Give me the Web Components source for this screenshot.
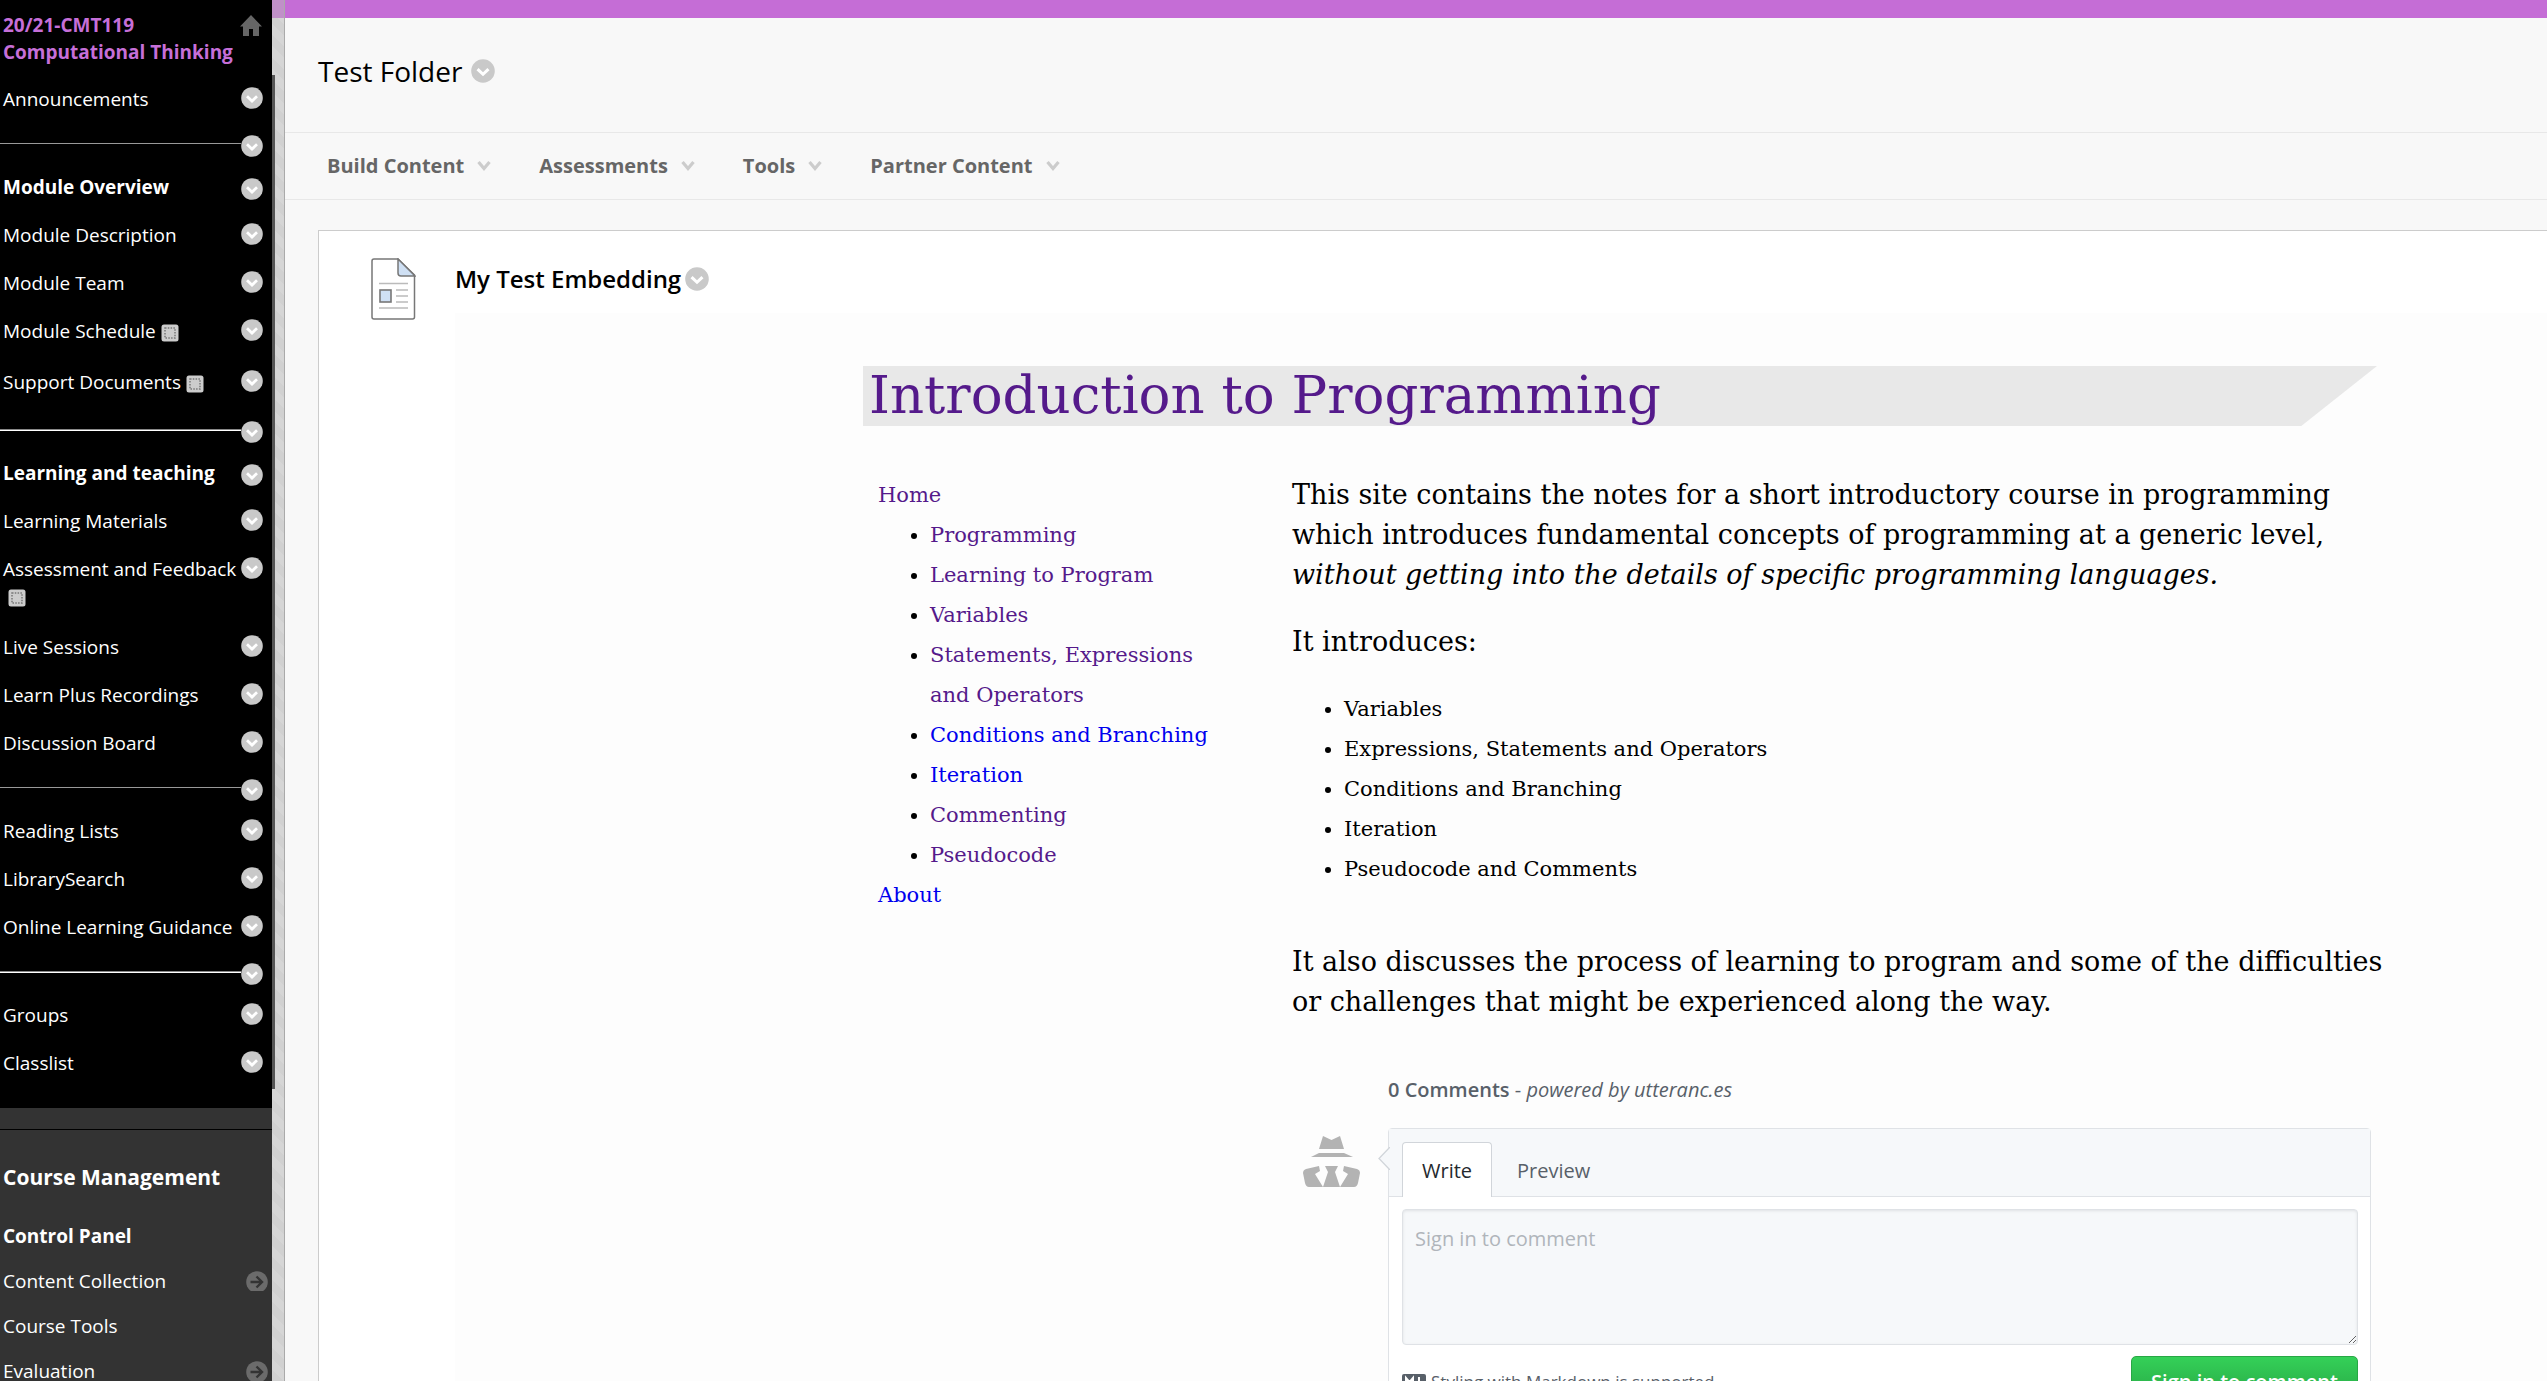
<!DOCTYPE html>
<html lang="en">
<head>
<meta charset="utf-8">
<title>Test Folder</title>
<style>
  html, body { margin: 0; height: 100%; overflow: hidden; }
  body { font-family: "Open Sans", sans-serif; font-size: 20px; background: #f8f8f8; color: #000; }
</style>
</head>
<body>
<course-page></course-page>
<script>
const define = (name, html) => customElements.define(name, class extends HTMLElement {
  constructor() {
    super();
    const t = document.createElement('template');
    t.innerHTML = html;
    this.attachShadow({ mode: 'open' }).append(t.content.cloneNode(true));
  }
});

define('menu-dot', `
<style>
  :host { display: block; flex: none; width: 22px; height: 22px; }
  :host([large]) { width: 24px; height: 24px; }
  button { display: block; width: 100%; height: 100%; padding: 0; border: 0; background: none; }
  svg { display: block; width: 100%; height: 100%; }
</style>
<button aria-label="Options"><svg viewBox="0 0 22 22"><circle cx="11" cy="11" r="10.8" fill="#c9c9c9"/><path d="M6 9.300l5 4.700 5-4.700" fill="none" stroke="#fff" stroke-width="2.800"/></svg></button>`);

define('hidden-mark', `
<style>:host { display: inline-block; width: 18px; height: 18px; vertical-align: -4px; } svg { display: block; }</style>
<svg width="18" height="18" viewBox="0 0 18 18"><rect x=".5" y=".5" width="17" height="17" rx="2.500" fill="#ccc"/><rect x="4" y="4" width="10" height="10" fill="none" stroke="#777" stroke-width="1.500" stroke-dasharray="1.500 1.300"/></svg>`);

define('nav-item', `
<style>
  :host { display: flex; justify-content: space-between; height: 27px; padding: 10px 9px 11px 3px; line-height: 27px; }
  :host([heading]) { padding: 7px 9px 11px 3px; font-weight: 700; }
  :host([marked]) { padding-bottom: 14px; }
  :host([wrapped]) { height: 57px; }
  a { color: #fff; text-decoration: none; white-space: nowrap; }
  menu-dot { margin-top: 1px; }
  :host([heading]) menu-dot { margin-top: 4px; }
</style>
<a href="#"><slot></slot></a><menu-dot></menu-dot>`);

define('nav-divider', `
<style>
  :host { display: flex; padding: 11px 9px 10px 0; }
  :host([short]) { padding-bottom: 7px; }
  hr { flex: 1; height: 1px; margin: 8px 0 0; border: 0; background: #999; }
  :host([strong]) hr { border-top: 1px solid #888; background: #fff; }
</style>
<hr><menu-dot></menu-dot>`);

define('panel-item', `
<style>
  :host { display: flex; justify-content: space-between; align-items: center; height: 45px; padding: 0 4px 0 3px; }
  a { color: #fff; text-decoration: none; }
  svg { display: none; }
  :host([arrow]) svg { display: block; }
</style>
<a href="#"><slot></slot></a>
<svg width="22" height="20" viewBox="0 0 22 20"><circle cx="11" cy="11" r="10.800" fill="#6b6b6b"/><path d="M4.500 11h11M10.500 5.500l5.500 5.500-5.500 5.500" fill="none" stroke="#333" stroke-width="2.400"/></svg>`);

define('course-sidebar', `
<style>
  :host { display: block; width: 272px; flex: none; background: #333; color: #fff; font-size: 19px; }
  .menu { background: #000; padding-bottom: 20px; }
  header { display: flex; justify-content: space-between; align-items: flex-start; height: 76px; box-sizing: border-box; padding: 12px 10px 0 3px; }
  header a { color: #c66fd8; font-weight: 700; line-height: 27px; text-decoration: none; white-space: nowrap; }
  header svg { margin: 3px 0 0 -22px; }
  h2, h3 { margin: 0; padding-left: 3px; }
  h2 { font-size: 21px; line-height: 30px; padding-top: 32px; }
  h3 { font-size: 19px; line-height: 28px; padding-top: 30px; padding-bottom: 8px; }
  .gap { height: 21px; border-bottom: 1px solid #000; }
</style>
<nav class="menu">
  <header><a href="#">20/21-CMT119<br>Computational Thinking</a>
  <svg width="22" height="21" viewBox="0 0 22 21"><path d="M11 0L0 11.500h3V21h6v-7h4v7h6v-9.500h3z" fill="#666"/></svg></header>
  <nav-item>Announcements</nav-item>
  <nav-divider></nav-divider>
  <nav-item heading>Module Overview</nav-item>
  <nav-item>Module Description</nav-item>
  <nav-item>Module Team</nav-item>
  <nav-item marked>Module Schedule <hidden-mark></hidden-mark></nav-item>
  <nav-item marked>Support Documents <hidden-mark></hidden-mark></nav-item>
  <nav-divider strong></nav-divider>
  <nav-item heading>Learning and teaching</nav-item>
  <nav-item>Learning Materials</nav-item>
  <nav-item wrapped>Assessment and Feedback<br>&nbsp;<hidden-mark></hidden-mark></nav-item>
  <nav-item>Live Sessions</nav-item>
  <nav-item>Learn Plus Recordings</nav-item>
  <nav-item>Discussion Board</nav-item>
  <nav-divider short></nav-divider>
  <nav-item>Reading Lists</nav-item>
  <nav-item>LibrarySearch</nav-item>
  <nav-item>Online Learning Guidance</nav-item>
  <nav-divider short strong></nav-divider>
  <nav-item>Groups</nav-item>
  <nav-item>Classlist</nav-item>
</nav>
<div class="gap"></div>
<h2>Course Management</h2>
<h3>Control Panel</h3>
<panel-item arrow>Content Collection</panel-item>
<panel-item>Course Tools</panel-item>
<panel-item arrow>Evaluation</panel-item>`);

define('side-handle', `
<style>
  :host { display: flex; flex-direction: column; flex: none; width: 13px; box-sizing: border-box; border-right: 1px solid #aaa;
    background: linear-gradient(#c090c8 0 18px, transparent 18px), repeating-linear-gradient(45deg, #d1d1d1 0 8px, #d6d6d6 8px 16px); }
  i { display: block; width: 3px; height: 1014px; margin-top: 75px; background: #555; }
</style><i></i>`);

define('action-menu', `
<style>
  :host { display: block; }
  button { display: flex; align-items: center; gap: 13px; padding: 0; border: 0; background: none; font: 700 20px/28px "Open Sans", sans-serif; color: #666; }
  svg { display: block; }
</style>
<button><slot></slot><svg width="14" height="12" viewBox="0 0 14 12"><path d="M1.500 2l5.500 6.500L12.500 2" fill="none" stroke="#ccc" stroke-width="3.200"/></svg></button>`);

define('comment-box', `
<style>
  :host { display: block; font-family: "Open Sans", sans-serif; font-size: 20px; color: #586069; }
  .count { margin: 0 0 0 96px; line-height: 30px; font-size: 20px; font-weight: 400; }
  .count b { font-weight: 600; }
  .count a { color: inherit; text-decoration: none; font-style: italic; }
  .row { display: flex; align-items: flex-start; margin-top: 23px; }
  .avatar { flex: none; width: 57px; margin: 8px 28px 0 11px; }
  .avatar svg { display: block; }
  form { position: relative; flex: 1; border: 1px solid #dfe2e6; border-radius: 4px; background: #fff; }
  .caret { position: absolute; left: -11px; top: 18px; }
  .tabs { display: flex; align-items: flex-end; height: 67px; padding-left: 13px; background: #f6f8fa; border-bottom: 1px solid #dfe2e6; }
  .tabs button { box-sizing: border-box; height: 55px; padding: 0 19px; margin-bottom: -1px; border: 1px solid transparent; border-bottom: 0; border-radius: 4px 4px 0 0; background: none; font: inherit; color: #586069; }
  .tabs button.on { background: #fff; color: #24292e; border-color: #d1d5da; }
  .tabs button + button { padding: 0 24px; }
  textarea { display: block; box-sizing: border-box; width: calc(100% - 25px); height: 136px; margin: 12px 12px 11px 13px; padding: 14px 12px; border: 1px solid #dfe2e6; border-radius: 4px; background: #f6f8fa; box-shadow: inset 0 1px 3px rgba(27,31,35,.1); font: inherit; line-height: 30px; resize: vertical; }
  textarea::placeholder { color: #b0b5bb; opacity: 1; }
  .foot { display: flex; justify-content: space-between; align-items: flex-start; padding: 0 12px 13px 13px; }
  .md { display: flex; align-items: center; gap: 5px; margin-top: 12px; font-size: 17px; line-height: 27px; color: #586069; text-decoration: none; }
  .go { height: 51px; width: 227px; padding: 0; border: 1px solid #28a745; border-radius: 5px; background: linear-gradient(#34d058, #28a745 90%); color: #fff; font: 600 20px/30px "Open Sans", sans-serif; }
</style>
<h4 class="count"><b>0 Comments</b> - <a href="#">powered by utteranc.es</a></h4>
<div class="row">
  <div class="avatar"><svg width="57" height="51" viewBox="0 0 57 51" fill="#b3b3b3"><path d="M20 0l8.500 4L37 0l4 13H16z"/><path d="M16 17h25l9 4H8z"/><path d="M16 30l-13 3q-3 1-3 4l2 10q1 4 4 4h14l-8-13 5-3z"/><path d="M41 30l13 3q3 1 3 4l-2 10q-1 4-4 4H37l8-13-5-3z"/><path d="M22 30h13l-3 6 5 15H20l5-15z"/></svg></div>
  <form>
    <svg class="caret" width="12" height="23" viewBox="0 0 12 23"><path d="M12 0L1 11.500 12 23" fill="#f6f8fa" stroke="#d1d5da" stroke-width="1.300"/></svg>
    <div class="tabs"><button type="button" class="on">Write</button><button type="button">Preview</button></div>
    <textarea aria-label="Comment" placeholder="Sign in to comment"></textarea>
    <div class="foot">
      <a class="md" href="#"><svg width="24" height="15" viewBox="0 0 24 15"><rect width="24" height="15" rx="2" fill="#586069"/><path d="M4 12V4l3.500 4L11 4v8M17 3v7M13.500 8l3.500 4 3.500-4" fill="none" stroke="#fff" stroke-width="2"/></svg>Styling with Markdown is supported</a>
      <button type="button" class="go">Sign in to comment</button>
    </div>
  </form>
</div>`);

define('site-frame', `
<style>
  :host { display: block; flex: 1; background: #fdfdfd; padding: 53px 170px 0 408px; font-family: "DejaVu Serif", serif; }
  h1 { margin: 0; height: 60px; line-height: 58px; padding-left: 6px; background: #e8e8e8; clip-path: polygon(0 0, 100% 0, 95% 100%, 0 100%); font-size: 53px; font-weight: 400; white-space: nowrap; }
  a { color: #551a8b; text-decoration: none; }
  a.new { color: #0000ee; }
  .cols { display: grid; grid-template-columns: 360px 1fr; column-gap: 54px; padding: 49px 0 0 15px; }
  nav, li { font-size: 21px; line-height: 40px; }
  ul { margin: 0; padding-left: 52px; }
  p { margin: 0 -10px 27px 0; font-size: 27px; line-height: 40px; }
  article ul { margin-bottom: 53px; }
  comment-box { margin: 53px 6px 0 0; }
</style>
<h1><a href="#">Introduction to Programming</a></h1>
<div class="cols">
  <nav><a href="#">Home</a>
    <ul>
      <li><a href="#">Programming</a></li><li><a href="#">Learning to Program</a></li><li><a href="#">Variables</a></li>
      <li><a href="#">Statements, Expressions<br>and Operators</a></li>
      <li><a class="new" href="#">Conditions and Branching</a></li><li><a class="new" href="#">Iteration</a></li>
      <li><a href="#">Commenting</a></li><li><a href="#">Pseudocode</a></li>
    </ul>
    <a class="new" href="#">About</a></nav>
  <article>
    <p>This site contains the notes for a short introductory course in programming which introduces fundamental concepts of programming at a generic level, <em>without getting into the details of specific programming languages.</em></p>
    <p>It introduces:</p>
    <ul><li>Variables</li><li>Expressions, Statements and Operators</li><li>Conditions and Branching</li><li>Iteration</li><li>Pseudocode and Comments</li></ul>
    <p>It also discusses the process of learning to program and some of the difficulties or challenges that might be experienced along the way.</p>
    <comment-box></comment-box>
  </article>
</div>`);

define('course-content', `
<style>
  :host { display: flex; flex-direction: column; flex: 1; min-width: 0; border-top: 18px solid #c56dd6; box-sizing: border-box; overflow: hidden; }
  .title { flex: none; display: flex; align-items: center; gap: 9px; height: 115px; padding: 0 33px 9px; box-sizing: border-box; border-bottom: 1px solid #e8e8e8; }
  h1 { margin: 0; font-size: 28px; line-height: 38px; font-weight: 400; }
  .bar { flex: none; display: flex; align-items: center; gap: 48px; height: 66px; padding-left: 42px; border-bottom: 1px solid #e8e8e8; }
  .card { flex: 1 0 auto; display: flex; margin: 30px 0 0 33px; border: solid #ccc; border-width: 1px 0 0 1px; background: #fff; }
  .icon { flex: none; width: 84px; padding: 27px 0 0 52px; }
  .body { flex: 1; min-width: 0; display: flex; flex-direction: column; }
  .head { flex: none; box-sizing: border-box; display: flex; align-items: center; gap: 4px; height: 82px; padding-top: 14px; }
  h2 { margin: 0; font-size: 24px; line-height: 32px; font-weight: 600; }
</style>
<div class="title"><h1>Test Folder</h1><menu-dot large></menu-dot></div>
<div class="bar"><action-menu>Build Content</action-menu><action-menu>Assessments</action-menu><action-menu>Tools</action-menu><action-menu>Partner Content</action-menu></div>
<div class="card">
  <div class="icon"><svg width="45" height="62" viewBox="0 0 45 62"><path d="M3 1h24l16.500 16v42q0 2-2 2H3q-2 0-2-2V3q0-2 2-2z" fill="#fff" stroke="#777" stroke-width="1.500"/><path d="M27 1v14q0 3 3 3h14z" fill="#cfe0f4" stroke="#777" stroke-width="1.500"/><path d="M8 25.500h29M25 32h12M25 38h12M25 44h12M8 50h29" stroke="#bbb" stroke-width="1.600"/><rect x="9" y="32" width="11" height="12" fill="#cfe0f4" stroke="#777" stroke-width="1.600"/></svg></div>
  <div class="body">
    <div class="head"><h2>My Test Embedding</h2><menu-dot large></menu-dot></div>
    <site-frame></site-frame>
  </div>
</div>`);

define('course-page', `
<style>:host { display: flex; height: 100vh; overflow: hidden; }</style>
<course-sidebar></course-sidebar><side-handle></side-handle><course-content></course-content>`);
</script>
</body>
</html>
